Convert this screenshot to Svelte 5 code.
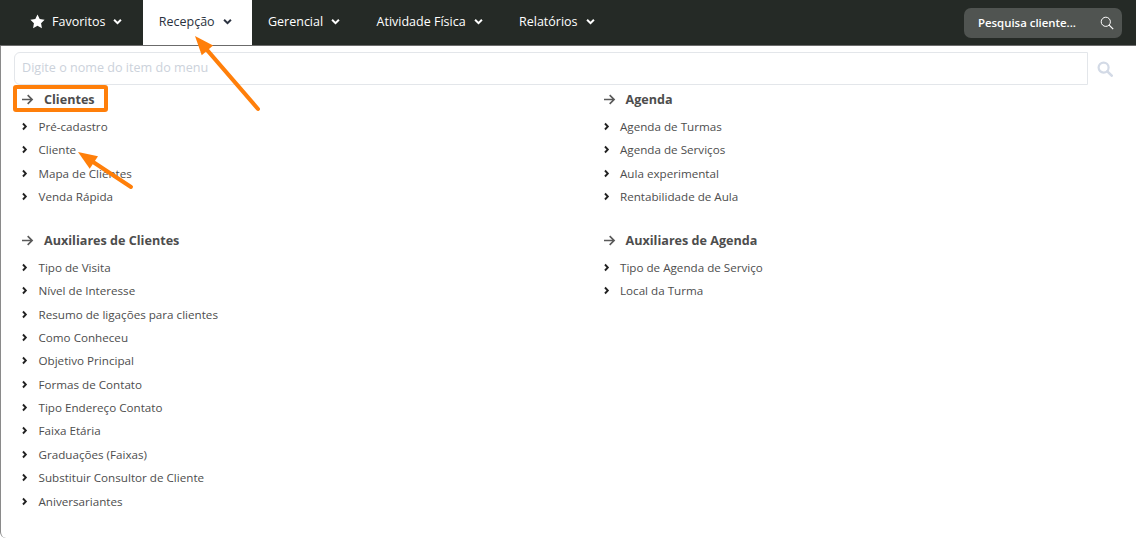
<script>
  const nav = [
    { label: 'Favoritos', star: true },
    { label: 'Recepção', active: true },
    { label: 'Gerencial' },
    { label: 'Atividade Física' },
    { label: 'Relatórios' }
  ];
  const columns = [
    [
      { title: 'Clientes', items: ['Pré-cadastro', 'Cliente', 'Mapa de Clientes', 'Venda Rápida'] },
      { title: 'Auxiliares de Clientes', items: ['Tipo de Visita', 'Nível de Interesse', 'Resumo de ligações para clientes', 'Como Conheceu', 'Objetivo Principal', 'Formas de Contato', 'Tipo Endereço Contato', 'Faixa Etária', 'Graduações (Faixas)', 'Substituir Consultor de Cliente', 'Aniversariantes'] }
    ],
    [
      { title: 'Agenda', items: ['Agenda de Turmas', 'Agenda de Serviços', 'Aula experimental', 'Rentabilidade de Aula'] },
      { title: 'Auxiliares de Agenda', items: ['Tipo de Agenda de Serviço', 'Local da Turma'] }
    ]
  ];
  const arrows = [
    { x1: 258, y1: 109, x2: 195, y2: 36 },
    { x1: 131, y1: 187, x2: 78, y2: 152 }
  ];
</script>

<div class="page">
  <header class="topbar">
    <nav class="menu">
      {#each nav as item}
        <div class="tab" class:active={item.active} class:fav={item.star}>
          {#if item.star}
            <svg class="star" viewBox="0 0 24 24" width="15" height="15"><path d="M12 .8l3.5 7.2 7.9 1.1-5.7 5.6 1.4 7.9L12 18.8l-7.1 3.8 1.4-7.9L.6 9.1l7.9-1.1z" fill="#fff"/></svg>
          {/if}
          <span>{item.label}</span>
          <svg class="caret" viewBox="0 0 10 10" width="9" height="9"><path d="M1.2 3L5 6.8 8.8 3" fill="none" stroke="currentColor" stroke-width="2.2"/></svg>
        </div>
      {/each}
    </nav>
    <div class="client-search">
      <span>Pesquisa cliente...</span>
      <svg viewBox="0 0 14 14" width="14" height="14"><circle cx="5.8" cy="5.8" r="4.6" fill="none" stroke="#fff" stroke-width="1"/><path d="M9.2 9.2l4 4" stroke="#fff" stroke-width="1.2"/></svg>
    </div>
  </header>

  <main class="panel">
    <div class="search-row">
      <div class="search-input">Digite o nome do item do menu</div>
      <svg class="search-icon" viewBox="0 0 16 16" width="16" height="16"><circle cx="6.6" cy="6.6" r="5" fill="none" stroke="#d3dae6" stroke-width="2.2"/><path d="M10.3 10.3l4.4 4.4" stroke="#d3dae6" stroke-width="2.6" stroke-linecap="round"/></svg>
    </div>
    <div class="columns">
      {#each columns as col}
        <div class="column">
          {#each col as group}
            <section class="group">
              <h3>
                <svg viewBox="0 0 14 12" width="13" height="11"><path d="M1 6h11M7.2 1.2L12 6l-4.8 4.8" fill="none" stroke="#5a5a5a" stroke-width="1.8"/></svg>
                <span>{group.title}</span>
              </h3>
              <ul>
                {#each group.items as entry}
                  <li>
                    <svg viewBox="0 0 8 10" width="6" height="9"><path d="M1.3 1l3.8 4-3.8 4" fill="none" stroke="#222" stroke-width="2.5"/></svg>
                    <span>{entry}</span>
                  </li>
                {/each}
              </ul>
            </section>
          {/each}
        </div>
      {/each}
    </div>
  </main>

  <div class="highlight"></div>
  <svg class="overlay" width="1136" height="538" viewBox="0 0 1136 538">
    {#each arrows as a}
      {@const ang = Math.atan2(a.y2 - a.y1, a.x2 - a.x1)}
      {@const bx = a.x2 - Math.cos(ang) * 19}
      {@const by = a.y2 - Math.sin(ang) * 19}
      {@const nx = -Math.sin(ang) * 7.5}
      {@const ny = Math.cos(ang) * 7.5}
      <line x1={a.x1} y1={a.y1} x2={bx} y2={by} stroke="#ff7f0a" stroke-width="4" stroke-linecap="round"/>
      <polygon points="{a.x2},{a.y2} {bx + nx},{by + ny} {bx - nx},{by - ny}" fill="#ff7f0a"/>
    {/each}
  </svg>
</div>

<style>
  :global(body) { margin: 0; background: #fff; }
  .page {
    position: relative;
    width: 1136px;
    height: 538px;
    overflow: hidden;
    font-family: "Open Sans", sans-serif;
    color: #4d4d4d;
  }
  .topbar {
    height: 45px;
    background: #252a26;
    display: flex;
    align-items: center;
    justify-content: space-between;
    padding-right: 14px;
    border-bottom: 1px solid #6b6b6b;
  }
  .menu { display: flex; height: 45px; align-self: flex-start; }
  .tab {
    display: flex;
    align-items: center;
    gap: 7px;
    padding: 0 20.4px 2px 16px;
    color: #fff;
    font-size: 12.5px;
    height: 45px;
    white-space: nowrap;
    box-sizing: border-box;
  }
  .tab.fav { padding-left: 30px; }
  .tab.active { background: #fff; color: #2b3240; }
  .caret { margin-left: 1px; }
  .client-search {
    width: 158px;
    height: 30px;
    box-sizing: border-box;
    background: #505451;
    border-radius: 7px;
    color: #fff;
    font-size: 11.4px;
    font-weight: 600;
    display: flex;
    align-items: center;
    justify-content: space-between;
    padding: 0 8px 0 14px;
  }
  .panel {
    border-left: 1px solid #8a8a8a;
    border-bottom-left-radius: 6px;
    height: 492px;
    box-sizing: border-box;
    padding: 6px 0 0 13px;
  }
  .search-row { display: flex; align-items: center; }
  .search-input {
    width: 1074px;
    height: 33px;
    box-sizing: border-box;
    border: 1px solid #e3e6ea;
    border-radius: 6px 0 0 6px;
    padding-left: 7px;
    font-size: 12.6px;
    line-height: 30px;
    color: #ccd2db;
  }
  .search-icon { margin-left: 9px; }
  .columns { display: flex; padding-top: 4px; }
  .column { width: 581.5px; flex: none; padding-left: 7px; box-sizing: border-box; }
  .column:last-child { width: 500px; }
  .group { margin-bottom: 23px; }
  .group:first-child { margin-bottom: 22.4px; }
  .group:first-child ul { padding-top: 0.6px; }
  h3 {
    margin: 0 0 5px;
    height: 20px;
    display: flex;
    align-items: center;
    gap: 10px;
    font-size: 12.6px;
    font-weight: 700;
    color: #4d4d4d;
  }
  ul { list-style: none; margin: 0; padding: 0; }
  li {
    height: 23.4px;
    display: flex;
    align-items: center;
    gap: 10.5px;
    padding-left: 1px;
    font-size: 11.65px;
    color: #4d4d4d;
  }
  .highlight {
    position: absolute;
    left: 13px;
    top: 85px;
    width: 95px;
    height: 27px;
    box-sizing: border-box;
    border: 4px solid #ff7f0a;
    border-radius: 3px;
  }
  .overlay { position: absolute; left: 0; top: 0; pointer-events: none; }
</style>
